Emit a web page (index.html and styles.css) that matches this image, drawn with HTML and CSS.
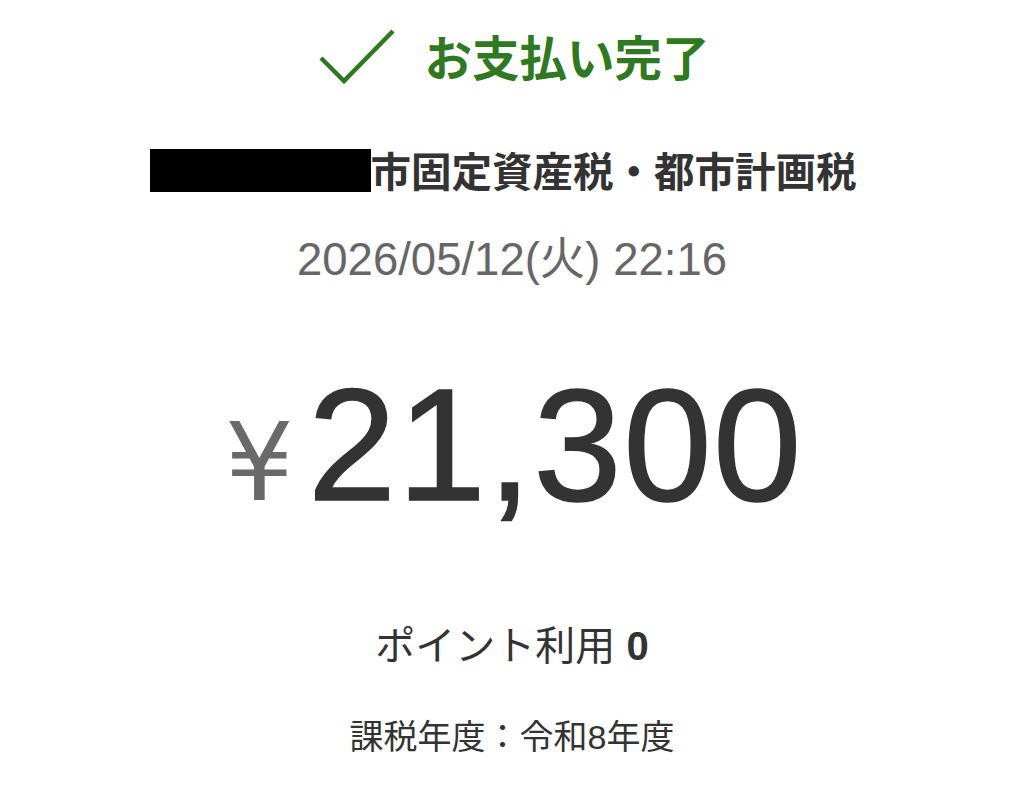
FILE: index.html
```html
<!DOCTYPE html>
<html lang="ja">
<head>
<meta charset="utf-8">
<title>お支払い完了</title>
<link rel="stylesheet" href="styles.css">
</head>
<body>
<main class="receipt">
  <div class="head">
    <svg class="check" width="76" height="56" viewBox="0 0 76 56" aria-hidden="true">
      <polyline points="2,30 25,53 74,3" fill="none" stroke="#2f7a20" stroke-width="4.5" stroke-linecap="butt" stroke-linejoin="miter"/>
    </svg>
    <span class="head-text">お支払い完了</span>
  </div>
  <div class="title"><span class="redact"></span><span>市固定資産税・都市計画税</span></div>
  <div class="date">2026/05/12(火) 22:16</div>
  <div class="amount"><span class="yen">¥</span><span class="num">21,300</span></div>
  <div class="points">ポイント利用 <b>0</b></div>
  <div class="year">課税年度：令和8年度</div>
</main>
</body>
</html>
```

FILE: styles.css
```css
html, body {
  margin: 0;
  padding: 0;
  background: #ffffff;
}
body {
  font-family: "Liberation Sans", "Noto Sans CJK JP", sans-serif;
  color: #333333;
}
.receipt {
  display: flex;
  flex-direction: column;
  align-items: center;
  width: 1024px;
  height: 811px;
  overflow: hidden;
}
.head {
  display: flex;
  align-items: center;
  gap: 30px;
  margin-top: 28px;
  height: 56px;
  margin-left: 4px;
}
.check {
  display: block;
}
.head-text {
  font-family: "Noto Sans CJK JP", sans-serif;
  font-size: 47.5px;
  font-weight: 700;
  color: #2f7a20;
  line-height: 56px;
}
.title {
  display: flex;
  align-items: center;
  margin-top: 61px;
  height: 50px;
  margin-right: 18px;
}
.title span:last-child {
  font-family: "Noto Sans CJK JP", sans-serif;
  font-size: 40.5px;
  font-weight: 700;
  color: #333333;
  line-height: 50px;
}
.redact {
  display: block;
  width: 221px;
  height: 43px;
  background: #000000;
}
.date {
  margin-top: 37px;
  font-size: 45.5px;
  line-height: 56px;
  color: #666666;
}
.amount {
  display: flex;
  align-items: baseline;
  margin-top: 72px;
  height: 170px;
  margin-left: 4px;
}
.yen {
  font-family: "DejaVu Sans", sans-serif;
  font-size: 108px;
  line-height: 170px;
  color: #6a6a6a;
  margin-right: 14px;
}
.num {
  font-size: 159px;
  line-height: 170px;
  letter-spacing: 1.5px;
  color: #333333;
  -webkit-text-stroke: 1.5px #333333;
}
.points {
  margin-top: 91px;
  font-size: 40px;
  line-height: 50px;
  color: #333333;
}
.points b {
  font-weight: 700;
}
.year {
  margin-top: 44px;
  font-size: 34px;
  line-height: 44px;
  color: #333333;
}
```
